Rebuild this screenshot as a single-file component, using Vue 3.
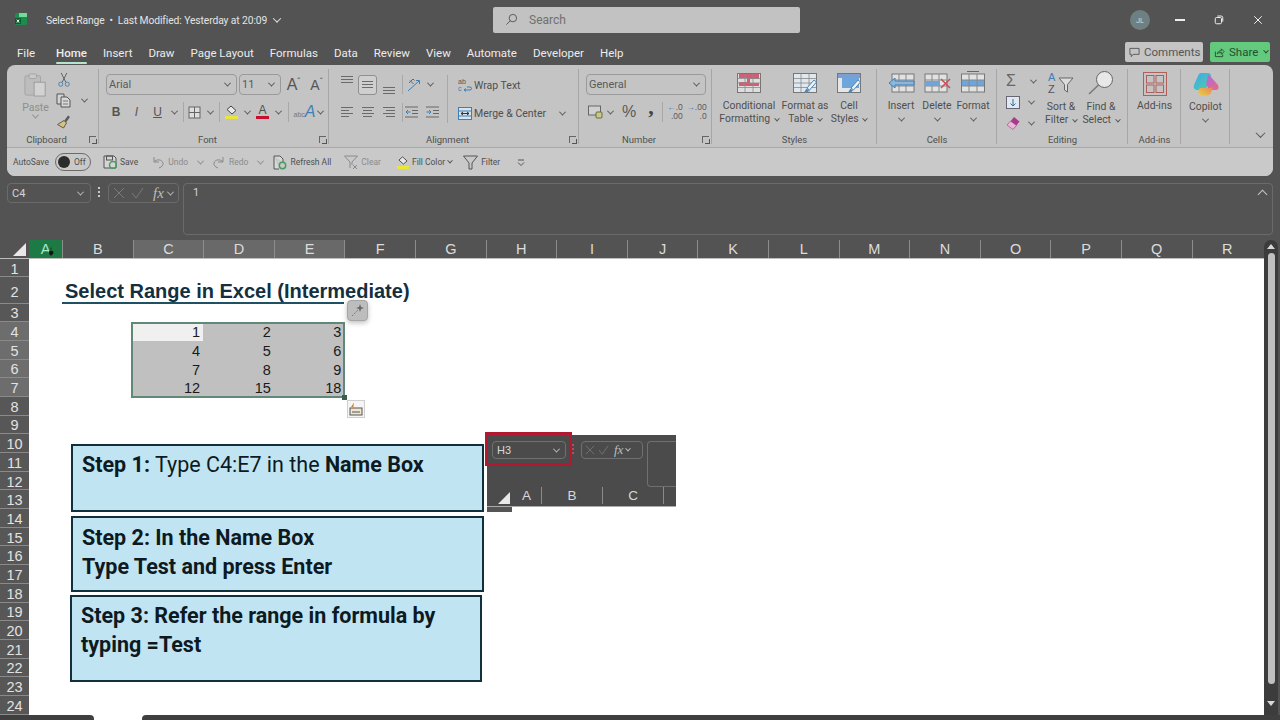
<template>
  <div class="app">
    <!-- title bar -->
    <header class="titlebar">
      <div class="title-left">
        <svg class="xl-logo" viewBox="0 0 14 14">
          <rect x="1" y="1" width="12" height="12" rx="1.5" fill="#1e8a4c" />
          <rect x="5" y="1" width="8" height="4" fill="#6fdc9c" />
          <rect x="1" y="6" width="6" height="6" fill="#0d5c31" />
          <path d="M2.8 7.6l2.4 3M5.2 7.6l-2.4 3" stroke="#fff" stroke-width="1" />
        </svg>
        <span class="doc-title">Select Range&nbsp; •&nbsp; Last Modified: Yesterday at 20:09</span>
        <span class="chev light title-chev"></span>
      </div>
      <div class="search">
        <svg class="search-icon" viewBox="0 0 14 14"><circle cx="8.5" cy="5.5" r="4" /><path d="M5.5 8.5L1.5 12.5" /></svg>
        <span>Search</span>
      </div>
      <div class="avatar">JL</div>
      <div class="win-btns">
        <span class="win-min"></span>
        <svg class="win-icon" viewBox="0 0 12 12"><rect x="1.5" y="3" width="7.5" height="7.5" rx="1.5" /><path d="M4 1.2h4.5a2 2 0 0 1 2 2V8" /></svg>
        <svg class="win-icon" viewBox="0 0 12 12"><path d="M1.5 1.5l9 9M10.5 1.5l-9 9" /></svg>
      </div>
    </header>

    <!-- tabs -->
    <nav class="tabs">
      <span v-for="tab in tabs" :key="tab" class="tab" :class="{ active: tab === 'Home' }">{{ tab }}</span>
      <div class="tab-actions">
        <button class="comments">
          <svg viewBox="0 0 12 12"><path d="M1 1.5h10v6.500H4.500L2.500 10.500V8H1z" /></svg>
          Comments
        </button>
        <button class="share">
          <svg viewBox="0 0 12 12"><path d="M1.500 5v5.500h8V8M3.500 7.500C4 5 6 4 8 4V2l3 3-3 3V6C6 6 4.800 6.300 3.500 7.500z" /></svg>
          Share <span class="chev dark small"></span>
        </button>
      </div>
    </nav>

    <!-- ribbon -->
    <section class="ribbon">
      <div class="ribbon-top">
        <!-- Clipboard -->
        <div class="group" style="width: 92px">
          <div class="group-body clip-body">
            <div class="paste">
              <svg width="23" height="26" viewBox="0 0 25 26">
                <rect x="1" y="3" width="17" height="21" rx="1.500" fill="#bdbdbd" stroke="#a2a2a2" />
                <rect x="5.500" y="1" width="8" height="5" rx="1" fill="#c9c9c9" stroke="#a2a2a2" />
                <rect x="11" y="10" width="12" height="15" fill="#d2d2d2" stroke="#9a9a9a" />
              </svg>
              <span class="muted">Paste</span>
              <span class="chev grey"></span>
            </div>
            <div class="clip-tools">
              <svg class="cut" width="14" height="15" viewBox="0 0 14 16"><path d="M4 1l5 10M10 1L5 11" stroke="#55606a" fill="none" /><circle cx="3.500" cy="13" r="2.200" fill="none" stroke="#4a7fa8" /><circle cx="10.500" cy="13" r="2.200" fill="none" stroke="#4a7fa8" /></svg>
              <div class="copy-row">
                <svg width="15" height="15" viewBox="0 0 15 15"><path d="M1 1h7v10H1z" fill="#d4d4d4" stroke="#555" /><path d="M5 4h6l3 3v7H5z" fill="#d8d8d8" stroke="#555" /><path d="M7 8h5M7 11h5" stroke="#777" /></svg>
                <span class="chev"></span>
              </div>
              <svg width="15" height="15" viewBox="0 0 15 15"><path d="M8 7l4-5.500 2 1.500-4 5.500z" fill="#5b5b5b" /><path d="M8 6.500l2.500 2.500-3 5-6-3.500z" fill="#d9c27a" stroke="#5b5b5b" /></svg>
            </div>
          </div>
          <div class="group-label shifted">Clipboard</div>
          <span class="launcher"></span>
        </div>

        <!-- Font -->
        <div class="group" style="width: 230px">
          <div class="group-body font-body">
            <div class="font-row-1">
              <div class="select font-name">Arial <span class="chev"></span></div>
              <div class="select font-size">11 <span class="chev"></span></div>
              <span class="grow-a">A<sup>ˆ</sup></span>
              <span class="grow-a shrink">A<sup>ˇ</sup></span>
            </div>
            <div class="font-row-2">
              <b class="fmt">B</b>
              <i class="fmt serifish">I</i>
              <span class="fmt under">U</span>
              <span class="chev"></span>
              <span class="vsep"></span>
              <svg width="13" height="13" viewBox="0 0 13 13"><rect x="1" y="1" width="11" height="11" fill="#dedede" stroke="#666" /><path d="M6.500 1v11M1 6.500h11" stroke="#666" /></svg>
              <span class="chev"></span>
              <span class="vsep"></span>
              <div class="swatch-icon">
                <svg width="13" height="10" viewBox="0 0 13 10"><path d="M6 1l5 4.500-4 3.500-5-4.500z" fill="#e8e8e8" stroke="#444" /></svg>
                <span class="swatch yellow"></span>
              </div>
              <span class="chev"></span>
              <div class="swatch-icon">
                <span class="letter-a">A</span>
                <span class="swatch red"></span>
              </div>
              <span class="chev"></span>
              <span class="vsep"></span>
              <span class="text-effect"><small>abc</small><em>A</em></span>
              <span class="chev"></span>
            </div>
          </div>
          <div class="group-label shifted">Font</div>
          <span class="launcher"></span>
        </div>

        <!-- Alignment -->
        <div class="group" style="width: 250px">
          <div class="group-body align-body">
            <div class="align-grid">
              <span class="lines top"><i></i><i></i><i></i></span>
              <span class="lines mid selected"><i></i><i></i><i></i></span>
              <span class="lines bottom"><i></i><i></i><i></i></span>
              <span class="vsep tall"></span>
              <div class="orient">
                <svg width="14" height="14" viewBox="0 0 14 14"><path d="M1 13L12 3M9 2.500h3.500V6" stroke="#3f7fb5" fill="none" /><path d="M2 5l4-4 1.500 1.500M3 2.500l3.500 3.500" stroke="#666" fill="none" /></svg>
                <span class="chev"></span>
              </div>
              <span class="lines"><i></i><i class="short"></i><i></i><i class="short"></i></span>
              <span class="lines center"><i></i><i class="short"></i><i></i><i class="short"></i></span>
              <span class="lines right"><i></i><i class="short"></i><i></i><i class="short"></i></span>
              <span class="vsep tall"></span>
              <div class="indents">
                <svg width="13" height="12" viewBox="0 0 13 12"><path d="M0 1h13M7 4.500h6M7 7.500h6M0 11h13" stroke="#666" /><path d="M5.500 6H1M3 4L1 6l2 2" stroke="#3f7fb5" fill="none" /></svg>
                <svg width="13" height="12" viewBox="0 0 13 12"><path d="M0 1h13M7 4.500h6M7 7.500h6M0 11h13" stroke="#666" /><path d="M0.500 6H5M3 4l2 2-2 2" stroke="#3f7fb5" fill="none" /></svg>
              </div>
            </div>
            <span class="vsep full"></span>
            <div class="wrap-col">
              <div class="icon-text">
                <svg width="14" height="14" viewBox="0 0 14 14"><text x="0" y="6" font-size="7" fill="#555" font-family="Liberation Sans">ab</text><path d="M9 9h3a1.500 1.500 0 0 1 0 3H6M8 10.500L6 12l2 1.500" stroke="#3f7fb5" fill="none" /><text x="0" y="13" font-size="7" fill="#3f7fb5" font-family="Liberation Sans">c</text></svg>
                Wrap Text
              </div>
              <div class="icon-text">
                <svg width="14" height="13" viewBox="0 0 14 13"><rect x="0.500" y="0.500" width="13" height="12" fill="#d5e4ef" stroke="#3f7fb5" /><path d="M0 4h14M0 9h14" stroke="#3f7fb5" /><path d="M3 6.500h8M5 5L3 6.500 5 8M9 5l2 1.500L9 8" stroke="#333" fill="none" /></svg>
                Merge &amp; Center
                <span class="chev merge-chev"></span>
              </div>
            </div>
          </div>
          <div class="group-label shifted">Alignment</div>
          <span class="launcher"></span>
        </div>

        <!-- Number -->
        <div class="group" style="width: 133px">
          <div class="group-body number-body">
            <div class="select general">General <span class="chev"></span></div>
            <div class="number-row">
              <svg width="15" height="14" viewBox="0 0 15 14"><rect x="0.500" y="1" width="12" height="9" fill="#d0d0d0" stroke="#666" /><rect x="8" y="7" width="6" height="6" rx="1" fill="#c7c98a" stroke="#6a6a3a" /></svg>
              <span class="chev"></span>
              <span class="percent">%</span>
              <span class="comma">,</span>
              <span class="vsep"></span>
              <span class="decimals"><em>←</em>.0<br />.00</span>
              <span class="decimals"><em>→</em>.00<br />.0</span>
            </div>
          </div>
          <div class="group-label shifted">Number</div>
          <span class="launcher"></span>
        </div>

        <!-- Styles -->
        <div class="group" style="width: 165px">
          <div class="group-body styles-body">
            <div class="big-btn">
              <svg width="24" height="20" viewBox="0 0 24 20"><rect x="0.500" y="0.500" width="23" height="19" fill="#dedede" stroke="#777" /><path d="M2 1h20v5H13v4h9v3H2V9h8V5H2z" fill="#cf5f75" /><path d="M8 1v18M16 1v18M1 5.500h22M1 10h22M1 14.500h22" stroke="#8b8b8b" stroke-width=".8" /></svg>
              <span>Conditional</span>
              <span>Formatting <i class="chev small"></i></span>
            </div>
            <div class="big-btn">
              <svg width="24" height="20" viewBox="0 0 24 20"><rect x="0.500" y="0.500" width="23" height="19" fill="#dfe8ef" stroke="#777" /><path d="M1 5.500h22M1 10h22M1 14.500h22M8 1v18M16 1v18" stroke="#888" stroke-width=".8" /><path d="M21 7l-7 8 2.500 2 7-8z" fill="#f1f1f1" stroke="#4f87b3" /><path d="M13.500 15.500l2.500 2-2 2h-3z" fill="#4f87b3" /></svg>
              <span>Format as</span>
              <span>Table <i class="chev small"></i></span>
            </div>
            <div class="big-btn">
              <svg width="24" height="20" viewBox="0 0 24 20"><rect x="0.500" y="0.500" width="23" height="19" fill="#e6e6e6" stroke="#777" /><rect x="1" y="1" width="22" height="4" fill="#7d9ed0" /><rect x="5" y="5" width="17" height="10" fill="#6da6dc" /><path d="M21 7l-7 8 2.500 2 7-8z" fill="#f1f1f1" stroke="#4f87b3" /><path d="M13.500 15.500l2.500 2-2 2h-3z" fill="#4f87b3" /></svg>
              <span>Cell</span>
              <span>Styles <i class="chev small"></i></span>
            </div>
          </div>
          <div class="group-label">Styles</div>
        </div>

        <!-- Cells -->
        <div class="group" style="width: 120px">
          <div class="group-body cells-body">
            <div class="big-btn">
              <svg width="27" height="20" viewBox="0 0 27 20"><rect x="4" y="1" width="22" height="18" fill="#e2e2e2" stroke="#777" /><path d="M4 7h22M4 13h22M11 1v18M18 1v18" stroke="#888" /><path d="M1 10l6-5v3h19v4H7v3z" fill="#8db7da" stroke="#3f7fb5" /></svg>
              <span>Insert</span>
              <span class="chev"></span>
            </div>
            <div class="big-btn">
              <svg width="27" height="20" viewBox="0 0 27 20"><rect x="1" y="1" width="22" height="18" fill="#e2e2e2" stroke="#777" /><path d="M1 7h22M1 13h22M8 1v18M15 1v18" stroke="#888" /><rect x="1" y="8" width="15" height="5" fill="#6da6dc" /><path d="M17 6l9 9M26 6l-9 9" stroke="#c4515a" stroke-width="1.500" /></svg>
              <span>Delete</span>
              <span class="chev"></span>
            </div>
            <div class="big-btn format-btn">
              <svg width="24" height="22" viewBox="0 0 24 22"><path d="M6 0.500h12" stroke="#666" /><rect x="0.500" y="3" width="23" height="18" fill="#e2e2e2" stroke="#777" /><rect x="1" y="9" width="22" height="6" fill="#6da6dc" /><path d="M1 9h22M1 15h22M8 3v18M16 3v18" stroke="#888" /></svg>
              <span>Format</span>
              <span class="chev"></span>
            </div>
          </div>
          <div class="group-label">Cells</div>
        </div>

        <!-- Editing -->
        <div class="group" style="width: 131px">
          <div class="group-body editing-body">
            <div class="edit-tools">
              <div><span class="sigma">Σ</span><span class="chev sigma-chev"></span></div>
              <div>
                <svg width="14" height="13" viewBox="0 0 14 13"><rect x="0.500" y="0.500" width="13" height="12" fill="#dfe9ef" stroke="#667" /><path d="M7 3v7M4.500 7.500L7 10l2.500-2.500" stroke="#2f6f9f" fill="none" /></svg>
                <span class="chev"></span>
              </div>
              <div>
                <svg width="14" height="14" viewBox="0 0 14 14"><path d="M8 1l5.500 4.500-6 7.500L2 8.500z" fill="#a83a8c" /><path d="M1 9l3.500-4 6 4.500L7 13.500z" fill="#e8b9d7" stroke="#a83a8c" stroke-width=".6" /></svg>
                <span class="chev"></span>
              </div>
            </div>
            <div class="big-btn sort-btn">
              <svg width="26" height="24" viewBox="0 0 26 24"><text x="0" y="10" font-size="11" fill="#3f7fb5" font-family="Liberation Sans">A</text><text x="0" y="22" font-size="11" fill="#555" font-family="Liberation Sans">Z</text><path d="M11 7h14l-5.500 6.500V21l-3-2v-5.500z" fill="#dcdcdc" stroke="#666" /></svg>
              <span>Sort &amp;</span>
              <span>Filter <i class="chev small"></i></span>
            </div>
            <div class="big-btn sort-btn">
              <svg width="26" height="24" viewBox="0 0 26 24"><circle cx="16.500" cy="8.500" r="8" fill="#e8e8e8" stroke="#666" /><path d="M10.500 14L1 23" stroke="#777" stroke-width="1.500" /></svg>
              <span>Find &amp;</span>
              <span>Select <i class="chev small"></i></span>
            </div>
          </div>
          <div class="group-label">Editing</div>
        </div>

        <!-- Add-ins -->
        <div class="group" style="width: 53px">
          <div class="group-body single-body">
            <div class="big-btn">
              <svg class="square" width="24" height="24" viewBox="0 0 24 24"><rect x="0.500" y="0.500" width="23" height="23" fill="none" stroke="#b0605a" /><rect x="3.500" y="3.500" width="7.500" height="7.500" fill="none" stroke="#b0605a" /><rect x="13" y="3.500" width="7.500" height="7.500" fill="none" stroke="#b0605a" /><rect x="3.500" y="13" width="7.500" height="7.500" fill="none" stroke="#b0605a" /><rect x="13" y="13" width="7.500" height="7.500" fill="none" stroke="#b0605a" /></svg>
              <span>Add-ins</span>
            </div>
          </div>
          <div class="group-label">Add-ins</div>
        </div>

        <!-- Copilot -->
        <div class="group" style="width: 49px">
          <div class="group-body single-body">
            <div class="big-btn">
              <svg class="square" width="26" height="24" viewBox="0 0 26 24">
                <defs>
                  <linearGradient id="cp-a" x1="0" y1="0" x2="1" y2="1"><stop offset="0" stop-color="#3fa7e8" /><stop offset="1" stop-color="#4fd0a8" /></linearGradient>
                  <linearGradient id="cp-b" x1="0" y1="0" x2="1" y2="1"><stop offset="0" stop-color="#b06ad8" /><stop offset="1" stop-color="#e86a8a" /></linearGradient>
                  <linearGradient id="cp-c" x1="0" y1="1" x2="1" y2="0"><stop offset="0" stop-color="#e8d04a" /><stop offset="1" stop-color="#e87a5a" /></linearGradient>
                </defs>
                <path d="M8 1h7c2 0 3 1 3 3L14 15c-.5 2-2 3-4 3H4C1.500 18 0 15.500 1 13L5 4c.8-1.800 1.800-3 3-3z" fill="url(#cp-a)" />
                <path d="M15 3c1.500 0 2.500 .800 3 2l7 8c1.200 2.500 .5 5-2 5h-7l-3-6z" fill="url(#cp-b)" />
                <path d="M7 16h10c1.500 0 3-1 3.500-2.500L18 21c-.6 1.500-2 2.500-3.500 2.500H8C5 23.500 4.500 19 7 16z" fill="url(#cp-c)" />
              </svg>
              <span class="copilot-label">Copilot</span>
              <span class="chev"></span>
            </div>
          </div>
        </div>

        <div class="ribbon-end"><span class="chev big"></span></div>
      </div>

      <!-- quick access -->
      <div class="qat">
        <span class="qat-item autosave">AutoSave</span>
        <span class="toggle"><i></i><b>Off</b></span>
        <span class="qat-item save">
          <svg width="14" height="14" viewBox="0 0 14 14"><path d="M1 1h10l2 2v10H1z" fill="#d5d5d5" stroke="#555" /><rect x="3.500" y="1" width="6" height="4" fill="none" stroke="#555" /><circle cx="10" cy="10" r="3.500" fill="none" stroke="#4c9a62" stroke-width="1.500" /></svg>
          Save
        </span>
        <span class="qat-item off undo">
          <svg width="14" height="14" viewBox="0 0 14 14"><path d="M3 2v5h5M3 7c2-3 8-3 9 1 .5 2-1 4-4 5" fill="none" stroke="#8a8a8a" /></svg>
          Undo
        </span>
        <span class="chev grey qat-chev"></span>
        <span class="qat-item off redo">
          <svg width="14" height="14" viewBox="0 0 14 14"><path d="M11 2v5H6M11 7C9 4 3 4 2 8c-.5 2 1 4 4 5" fill="none" stroke="#8a8a8a" /></svg>
          Redo
        </span>
        <span class="chev grey qat-chev"></span>
        <span class="qat-item refresh">
          <svg width="14" height="15" viewBox="0 0 14 15"><path d="M1 1h6l3 3v3M1 1v13h5" fill="#d8d8d8" stroke="#555" /><circle cx="9.500" cy="10.500" r="3.200" fill="none" stroke="#4c9a62" stroke-width="1.500" /></svg>
          Refresh All
        </span>
        <span class="qat-item off clear">
          <svg width="14" height="14" viewBox="0 0 14 14"><path d="M0.500 1h13L8 7v3" fill="none" stroke="#8a8a8a" /><path d="M0.500 1L6 7v6" fill="none" stroke="#8a8a8a" /><path d="M9 10l4 4M13 10l-4 4" stroke="#8a8a8a" /></svg>
          Clear
        </span>
        <span class="qat-item fill">
          <span class="swatch-icon qat-swatch">
            <svg width="12" height="9" viewBox="0 0 13 10"><path d="M6 1l5 4.500-4 3.500-5-4.500z" fill="#e8e8e8" stroke="#444" /></svg>
            <span class="swatch yellow"></span>
          </span>
          Fill Color
          <span class="chev small"></span>
        </span>
        <span class="qat-item filter">
          <svg width="15" height="15" viewBox="0 0 15 15"><path d="M0.500 1h14L9 8v6H6V8z" fill="none" stroke="#555" /></svg>
          Filter
        </span>
        <svg class="qat-more" width="8" height="7" viewBox="0 0 8 7"><path d="M1 1h6M1 3.500l3 3 3-3" fill="none" stroke="#555" /></svg>
      </div>
    </section>

    <!-- formula bar -->
    <section class="formula-bar">
      <div class="name-box">C4 <span class="chev lightish"></span></div>
      <span class="dots"></span>
      <div class="fx-box">
        <svg width="12" height="12" viewBox="0 0 12 12"><path d="M1 1l10 10M11 1L1 11" stroke="#7a7a7a" /></svg>
        <svg width="13" height="12" viewBox="0 0 13 12"><path d="M1 6l4 5 7-10" stroke="#7a7a7a" fill="none" /></svg>
        <span class="fx">fx</span>
        <span class="chev lightish"></span>
      </div>
      <div class="formula-input">1<span class="chev up"></span></div>
    </section>

    <!-- sheet -->
    <section class="sheet-area">
      <div class="sheet-main">
        <div class="col-heads">
          <div class="corner"><i></i></div>
          <div
            v-for="c in columns"
            :key="c"
            class="col-head"
            :class="{ green: c === 'A', sel: selectedCols.includes(c) }"
          >{{ c }}</div>
          <svg class="pointer" viewBox="0 0 6 9"><path d="M3 0.500v4M1 4.500h4v2L3 8.500 1 6.500z" fill="#111" stroke="#111" stroke-width=".6" /></svg>
        </div>
        <div class="sheet">
          <template v-for="r in 24" :key="r">
            <div class="row-head" :class="{ sel: r >= 4 && r <= 7, tall: r === 2 }">{{ r }}</div>
            <div
              v-for="c in columns"
              :key="c + r"
              class="cell"
              :class="cellClass(c, r)"
            >{{ values[c + r] }}</div>
          </template>

          <!-- things floating on the sheet -->
          <div class="selection"><i></i></div>
          <div class="spark">
            <svg width="15" height="15" viewBox="0 0 15 15"><path d="M10 1l1 3 3 1-3 1-1 3-1-3-3-1 3-1z" fill="#666" /><path d="M2 13l6-6" stroke="#777" stroke-dasharray="1.500 1" /></svg>
          </div>
          <div class="quick">
            <svg width="14" height="14" viewBox="0 0 14 14"><rect x="1" y="6" width="12" height="7" fill="#f0e6d0" stroke="#555" /><path d="M3 10h8" stroke="#555" /><path d="M5 0.500L2 5h3L4 8" fill="#d9822b" /></svg>
          </div>

          <div class="step-box step-1">
            <p><b>Step 1:</b> Type C4:E7 in the <b>Name Box</b></p>
          </div>
          <div class="step-box step-2">
            <p><b>Step 2: In the Name Box</b></p>
            <p><b>Type Test and press Enter</b></p>
          </div>
          <div class="step-box step-3">
            <p><b>Step 3: Refer the range in formula by</b></p>
            <p><b>typing =Test</b></p>
          </div>

          <div class="pic">
            <div class="pic-top">
              <div class="pic-name">H3 <span class="chev lightish"></span></div>
              <span class="dots red-dots"></span>
              <div class="pic-fx">
                <svg width="10" height="10" viewBox="0 0 12 12"><path d="M1 1l10 10M11 1L1 11" stroke="#777" /></svg>
                <svg width="11" height="10" viewBox="0 0 13 12"><path d="M1 6l4 5 7-10" stroke="#777" fill="none" /></svg>
                <span class="fx small-fx">fx</span>
                <span class="chev lightish small"></span>
              </div>
              <div class="pic-input"></div>
            </div>
            <div class="pic-head">
              <div class="pic-corner"><i></i></div>
              <span class="pic-a">A</span>
              <span class="pic-b">B</span>
              <span class="pic-c">C</span>
            </div>
            <div class="pic-frame"></div>
          </div>
          <div class="pic-tail"></div>
        </div>
      </div>

      <div class="vscroll">
        <span class="arrow-up"></span>
        <div class="thumb"></div>
        <span class="arrow-down"></span>
      </div>
    </section>

    <!-- bottom edge -->
    <footer class="bottom-edge">
      <div class="edge-left"></div>
      <div class="edge-gap"></div>
      <div class="edge-right"></div>
    </footer>
  </div>
</template>

<script setup>
const tabs = ['File', 'Home', 'Insert', 'Draw', 'Page Layout', 'Formulas', 'Data', 'Review', 'View', 'Automate', 'Developer', 'Help']

const columns = ['A', 'B', 'C', 'D', 'E', 'F', 'G', 'H', 'I', 'J', 'K', 'L', 'M', 'N', 'O', 'P', 'Q', 'R']
const selectedCols = ['C', 'D', 'E']

const values = {
  B2: 'Select Range in Excel (Intermediate)',
  C4: 1, D4: 2, E4: 3,
  C5: 4, D5: 5, E5: 6,
  C6: 7, D6: 8, E6: 9,
  C7: 12, D7: 15, E7: 18
}

function cellClass(c, r) {
  return {
    title: c === 'B' && r === 2,
    underlined: r === 2 && ['B', 'C', 'D', 'E'].includes(c),
    picked: r >= 4 && r <= 7 && selectedCols.includes(c),
    active: c === 'C' && r === 4
  }
}
</script>

<style>
html, body { margin: 0; background: #535353; }
</style>

<style scoped>
.app {
  width: 1280px; height: 720px; overflow: hidden;
  display: flex; flex-direction: column;
  background: #535353; color: #4c4c4c;
  font-family: Roboto, "Liberation Sans", sans-serif;
  font-size: 11px;
}
button { font-family: inherit; border: 0; }

/* chevrons */
.chev {
  display: inline-block; width: 4px; height: 4px; flex: none;
  border-right: 1px solid #555; border-bottom: 1px solid #555;
  transform: rotate(45deg) translate(-1px, -1px);
}
.chev.small { width: 3px; height: 3px; }
.chev.big { width: 6px; height: 6px; }
.chev.grey { border-color: #8d8d8d; }
.chev.light { border-color: #e2e2e2; width: 5px; height: 5px; }
.chev.lightish { border-color: #bdbdbd; }
.chev.dark { border-color: #24502f; }

/* title bar */
.titlebar { height: 40px; flex: none; display: flex; align-items: center; color: #e4e4e4; }
.title-left { width: 493px; flex: none; display: flex; align-items: center; white-space: nowrap; }
.xl-logo { width: 14px; height: 14px; margin: 0 0 2px 14px; }
.doc-title { margin-left: 18px; font-size: 10.300px; letter-spacing: -0.100px; }
.title-chev { margin-left: 7px; }
.search {
  width: 307px; height: 26px; box-sizing: border-box; margin-bottom: 1px;
  background: #c2c2c2; border-radius: 2px;
  display: flex; align-items: center; padding-left: 12px; gap: 11px;
  color: #707070; font-size: 12px;
}
.search-icon { width: 13px; height: 13px; fill: none; stroke: #555; }
.avatar {
  width: 20px; height: 20px; border-radius: 50%; margin-left: 330px;
  background: #6f8083; color: #d6dcdc; font-size: 7.500px;
  display: flex; align-items: center; justify-content: center;
}
.win-btns { display: flex; align-items: center; margin-left: 25px; }
.win-btns > * { margin-right: 29px; }
.win-min { width: 10px; height: 1.500px; background: #eee; }
.win-icon { width: 10px; height: 10px; fill: none; stroke: #eee; stroke-width: 1.200; }
.win-btns > .win-icon:last-child { margin-right: 0; }

/* tabs */
.tabs {
  height: 25px; flex: none; display: flex; align-items: center; gap: 16px;
  padding-left: 17px; color: #ececec; font-size: 11.500px;
}
.tab { position: relative; line-height: 20px; }
.tab:first-child { margin-right: 5px; }
.tab.active { font-weight: 500; }
.tab.active::after {
  content: ""; position: absolute; left: 0; right: 0; bottom: -1px; height: 1.500px;
  background: #b7e4cd; border-radius: 1px;
}
.tab-actions { margin-left: auto; margin-right: 10px; display: flex; gap: 7px; margin-top: -1px; }
.comments, .share {
  height: 20px; padding: 0 0 0 4px; border-radius: 2px; display: flex; align-items: center; gap: 4px;
  font-size: 11.500px;
}
.comments { width: 78px; background: #c4c4c4; color: #555; box-sizing: border-box; }
.comments svg { width: 11px; height: 11px; fill: none; stroke: #555; }
.share { width: 60px; background: #62c97d; color: #24502f; box-sizing: border-box; }
.share svg { width: 11px; height: 11px; fill: none; stroke: #24502f; }
.share .chev { margin-left: 2px; }

/* ribbon */
.ribbon {
  height: 111px; flex: none; margin: 0 7px; box-sizing: border-box;
  background: #c4c4c4; border-radius: 8px;
  display: flex; flex-direction: column;
}
.ribbon-top { height: 82px; flex: none; display: flex; border-bottom: 1px solid #a9a9a9; box-sizing: content-box; }
.group { position: relative; display: flex; flex-direction: column; box-sizing: border-box; height: 100%; }
.group::after {
  content: ""; position: absolute; right: 0; top: 4px; bottom: 3px; width: 1px; background: #a6a6a6;
}
.group-body { height: 67px; flex: none; box-sizing: border-box; }
.group-label { height: 15px; line-height: 15px; text-align: center; font-size: 9.500px; color: #4f4f4f; }
.group-label.shifted { padding-right: 13px; }
.launcher {
  position: absolute; right: 3px; bottom: 4px; width: 7px; height: 7px; box-sizing: border-box;
  border-left: 1px solid #666; border-top: 1px solid #666;
}
.launcher::after {
  content: ""; position: absolute; right: -1px; bottom: -1px; width: 4px; height: 4px;
  border-right: 1px solid #555; border-bottom: 1px solid #555;
}
.muted { color: #8e8e8e; }
.vsep { width: 1px; height: 20px; background: #a8a8a8; }

/* clipboard */
.clip-body { display: flex; padding: 7px 0 0 17px; }
.paste { width: 23px; display: flex; flex-direction: column; align-items: center; font-size: 10.500px; }
.paste span:nth-child(2) { margin-top: 3px; line-height: 13px; }
.clip-tools { margin-left: 9px; display: flex; flex-direction: column; gap: 6px; }
.cut { margin-left: 1px; }
.copy-row { display: flex; align-items: center; gap: 11px; }

/* font */
.font-body { padding: 9px 0 0 7px; }
.select {
  height: 21px; box-sizing: border-box; border: 1px solid #9a9a9a; border-radius: 4px;
  background: #c4c4c4; display: flex; align-items: center; justify-content: space-between;
  padding: 0 6px 0 2px; font-size: 11px; color: #5a5a5a;
}
.font-row-1 { display: flex; align-items: center; gap: 2px; }
.font-name { width: 131px; }
.font-size { width: 42px; }
.grow-a { font-size: 16px; width: 21px; text-align: center; color: #555; font-family: "Liberation Sans", sans-serif; line-height: 1; }
.grow-a sup { font-size: 9px; line-height: 0; }
.shrink { font-size: 14px; }
.font-row-2 {
  display: grid; margin-top: 6px; height: 22px; align-items: center; justify-items: center;
  grid-template-columns: 20px 21px 21px 12px 6px 16px 16px 2px 22px 10px 21px 11px 9px 23px 8px;
}
.fmt { font-family: "Liberation Sans", sans-serif; font-size: 12px; color: #555; }
.under { text-decoration: underline; }
.swatch-icon { display: flex; flex-direction: column; align-items: center; gap: 1px; width: 14px; }
.swatch { width: 13px; height: 3px; display: block; }
.swatch.yellow { background: #e8e636; }
.swatch.red { background: #c8102e; }
.letter-a { font-family: "Liberation Sans", sans-serif; font-size: 12px; line-height: 10px; }
.text-effect { font-family: "Liberation Sans", sans-serif; line-height: 1; white-space: nowrap; }
.text-effect small { font-size: 7px; color: #777; }
.text-effect em { font-size: 16px; color: #3f7fb5; }

/* alignment */
.align-body { display: flex; padding: 9px 0 0 7px; }
.align-grid {
  display: grid; grid-template-columns: 21px 21px 21px 6px 40px; grid-template-rows: 21px 22px;
  row-gap: 6px; align-items: center; justify-items: center;
}
.lines { display: flex; flex-direction: column; gap: 2.200px; width: 12px; }
.lines i { display: block; height: 1px; background: #6a6a6a; width: 100%; }
.lines i.short { width: 70%; }
.lines.center { align-items: center; }
.lines.right { align-items: flex-end; }
.lines.top { align-self: start; padding-top: 2px; }
.lines.bottom { align-self: end; padding-bottom: 1px; }
.lines.selected {
  width: 19px; height: 20px; box-sizing: border-box; padding: 5px 3px; border: 1px solid #8f8f8f;
  border-radius: 3px; background: #cfcfcf;
}
.vsep.tall { height: 19px; }
.orient { display: flex; align-items: center; gap: 7px; justify-self: start; padding-left: 2px; }
.indents { display: flex; gap: 8px; justify-self: start; padding-left: 0; }
.vsep.full { height: 48px; margin-left: 2px; margin-top: 1px; }
.wrap-col { margin-left: 10px; display: flex; flex-direction: column; gap: 6px; }
.icon-text { height: 22px; display: flex; align-items: center; gap: 2px; font-size: 10.500px; color: #4f4f4f; white-space: nowrap; }
.merge-chev { margin-left: 12px; }

/* number */
.number-body { padding: 9px 0 0 7px; }
.general { width: 120px; }
.number-row {
  display: grid; margin-top: 6px; height: 22px; align-items: center; justify-items: center;
  grid-template-columns: 18px 12px 26px 18px 4px 22px 21px;
}
.percent { font-family: "Liberation Sans", sans-serif; font-size: 16px; color: #5a5a5a; }
.comma { font-family: "Liberation Serif", serif; font-weight: bold; font-size: 22px; line-height: 10px; margin-top: -11px; color: #444; }
.decimals { font-family: "Liberation Sans", sans-serif; font-size: 8.500px; line-height: 9px; color: #5a5a5a; text-align: right; white-space: nowrap; }
.decimals em { color: #3f7fb5; font-style: normal; }

/* big buttons */
.big-btn { display: flex; flex-direction: column; align-items: center; line-height: 13px; font-size: 10.400px; color: #4f4f4f; white-space: nowrap; }
.big-btn svg { margin-bottom: 6px; }
.big-btn > span.chev { margin-top: 5px; }
.big-btn i.chev { margin-left: 2px; }
.styles-body { display: grid; grid-template-columns: 58px 54px 34px; padding: 8px 0 0 8px; }
.cells-body { display: grid; grid-template-columns: 36px 36px 36px; padding: 8px 0 0 6px; }
.format-btn svg { margin-top: -2px; }
.editing-body { display: flex; padding: 6px 0 0 0; }
.edit-tools { width: 44px; padding: 2px 0 0 9px; box-sizing: border-box; display: flex; flex-direction: column; gap: 5px; }
.edit-tools > div { height: 16px; display: flex; align-items: center; gap: 9px; }
.sigma { font-family: "Liberation Sans", sans-serif; font-size: 16px; width: 12px; line-height: 1; color: #666; }
.sigma-chev { margin-left: 4px; }
.sort-btn { width: 40px; }
.sort-btn svg { margin-bottom: 5px; }
.single-body { display: flex; justify-content: center; padding-top: 7px; }
.big-btn svg.square { margin-bottom: 3px; }
.copilot-label { margin-top: 1px; }
.ribbon-end { flex: 1; display: flex; justify-content: flex-end; align-items: flex-end; padding: 0 9px 9px 0; }

/* quick access */
.qat { flex: 1; display: flex; align-items: center; background: #c9c9c9; border-radius: 0 0 8px 8px; padding-left: 6px; font-size: 8.500px; color: #4f4f4f; }
.qat-item { display: flex; align-items: center; gap: 3px; white-space: nowrap; }
.qat-item.off { color: #8b8b8b; }
.autosave { width: 36px; }
.toggle {
  margin-left: 6px; width: 36px; height: 18px; box-sizing: border-box; border: 1px solid #6b6b6b; border-radius: 9px;
  display: flex; align-items: center; padding-left: 2px; gap: 4px; flex: none;
}
.toggle i { width: 12px; height: 12px; border-radius: 50%; background: #2c2c2c; }
.toggle b { font-weight: normal; }
.save { margin-left: 12px; }
.undo { margin-left: 13px; }
.qat-chev { margin-left: 10px; }
.redo { margin-left: 9px; }
.refresh { margin-left: 10px; }
.clear { margin-left: 13px; }
.fill { margin-left: 16px; }
.qat-swatch { width: 12px; }
.qat-swatch .swatch { width: 12px; }
.filter { margin-left: 11px; }
.qat-more { margin-left: 17px; }

/* formula bar */
.formula-bar { height: 52px; flex: none; margin: 7px 7px 5px; display: flex; align-items: flex-start; color: #d4d4d4; font-size: 11px; }
.name-box {
  width: 84px; height: 20px; box-sizing: border-box; border: 1px solid #6b6b6b; border-radius: 4px;
  display: flex; align-items: center; justify-content: space-between; padding: 0 7px 0 4px;
}
.dots { width: 2px; height: 2px; margin: 4px 8px 0 7px; background: #c8c8c8; box-shadow: 0 4px 0 #c8c8c8, 0 8px 0 #c8c8c8; flex: none; }
.fx-box {
  width: 71px; height: 20px; box-sizing: border-box; border: 1px solid #6b6b6b; border-radius: 4px;
  display: flex; align-items: center; padding-left: 4px; gap: 6px;
}
.fx { font-family: "Liberation Serif", serif; font-style: italic; font-size: 15px; color: #bdbdbd; margin-left: 3px; }
.fx-box .chev { margin-left: -2px; }
.formula-input {
  flex: 1; margin-left: 4px; height: 52px; box-sizing: border-box; border: 1px solid #6b6b6b; border-radius: 4px;
  padding: 2px 9px; display: flex; justify-content: space-between; align-items: flex-start;
}
.chev.up { transform: rotate(225deg); border-color: #c4c4c4; width: 6px; height: 6px; margin-top: 5px; margin-right: -3px; }

/* sheet */
.sheet-area { height: 475px; flex: none; display: flex; }
.sheet-main { width: 1264px; flex: none; overflow: hidden; }
.col-heads {
  position: relative; height: 19px; display: grid; box-sizing: border-box;
  grid-template-columns: 29px 33px repeat(17, 70.600px);
  font-family: "Liberation Sans", sans-serif; font-size: 14.500px; color: #dcdcdc;
  border-bottom: 1px solid #bdbdbd;
}
.corner { position: relative; }
.corner i {
  position: absolute; right: 3px; bottom: 2px; width: 0; height: 0;
  border-left: 13px solid transparent; border-bottom: 13px solid #e8e8e8;
}
.col-head { text-align: center; line-height: 18px; border-left: 1px solid #8d8d8d; box-sizing: border-box; background: #535353; }
.col-head.sel { background: #696969; }
.col-head.green { background: #1d7a45; color: #a9e8c3; border-left: 0; }
.pointer { position: absolute; left: 48px; top: 7px; width: 6px; height: 9px; }

.sheet {
  position: relative; height: 456px; display: grid; background: #fff; overflow: hidden;
  grid-template-columns: 29px 33px repeat(17, 70.600px);
  grid-template-rows: 18px 26.500px repeat(22, 18.700px);
  font-family: "Liberation Sans", sans-serif; font-size: 14.500px; color: #222;
}
.row-head {
  background: #575757; color: #e2e2e2;
  border-bottom: 1px solid #8a8a8a; box-sizing: border-box; padding-top: 2px;
  display: flex; align-items: center; justify-content: center; font-size: 14.500px;
}
.row-head.tall { padding-top: 5px; }
.row-head.sel { background: #6d6d6d; }
.cell { min-width: 0; box-sizing: border-box; line-height: 19px; white-space: nowrap; }
.cell.title {
  font-weight: bold; font-size: 20px; color: #14303e; padding: 2px 0 0 3px; line-height: 24px; overflow: visible;
}
.cell.underlined { border-bottom: 2px solid #1f5163; }
.cell.picked { background: #c0c0c0; text-align: right; padding: 1px 3px 0 0; color: #1a1a1a; }
.cell.active { background: #f0f0f0; }

.selection {
  position: absolute; left: 131px; top: 63px; width: 214px; height: 76px; box-sizing: border-box;
  border: 2px solid #5f8877; pointer-events: none;
}
.selection i { position: absolute; right: -4px; bottom: -4px; width: 5px; height: 5px; background: #3a5d4e; }
.spark {
  position: absolute; left: 347px; top: 41px; width: 21px; height: 21px; border-radius: 4px;
  background: #bdbdbd; border: 1px solid #a5a5a5; box-sizing: border-box; box-shadow: 0 2px 5px rgba(0,0,0,.25);
  display: flex; align-items: center; justify-content: center;
}
.quick {
  position: absolute; left: 347px; top: 141px; width: 18px; height: 18px; box-sizing: border-box;
  border: 1px solid #cfcfcf; background: #f5f5f5; display: flex; align-items: center; justify-content: center;
}

.step-box {
  position: absolute; box-sizing: border-box; background: #c1e4f3; border: 2px solid #10303c;
  font-family: Roboto, "Noto Sans", sans-serif; font-size: 21.500px; line-height: 29px; color: #0d1a22; padding: 4px 0 0 9px;
}
.step-box p { margin: 0; }
.step-box b { font-weight: 700; }
.step-1 { left: 71px; top: 185px; width: 413px; height: 68px; }
.step-2 { left: 71px; top: 257px; width: 413px; height: 76px; padding-top: 5px; }
.step-3 { left: 70px; top: 336px; width: 412px; height: 87px; padding-top: 4px; }

.pic {
  position: absolute; left: 487px; top: 176px; width: 189px; height: 72px; background: #4b4b4b;
  border-bottom: 1px solid #aaa; box-sizing: border-box; color: #d8d8d8;
}
.pic-top { height: 52px; display: flex; align-items: flex-start; padding: 6px 0 0 5px; box-sizing: border-box; font-size: 11px; }
.pic-name {
  width: 74px; height: 18px; box-sizing: border-box; border: 1px solid #707070; border-radius: 4px;
  display: flex; align-items: center; justify-content: space-between; padding: 0 6px 0 4px;
}
.dots.red-dots { background: #c0475c; box-shadow: 0 4px 0 #c0475c, 0 8px 0 #c0475c; margin: 3px 7px 0 6px; }
.pic-fx {
  width: 62px; height: 18px; box-sizing: border-box; border: 1px solid #707070; border-radius: 4px;
  display: flex; align-items: center; gap: 3px; padding-left: 3px;
}
.small-fx { font-size: 13px; margin-left: 2px; }
.pic-input { flex: 1; margin-left: 4px; height: 46px; box-sizing: border-box; border: 1px solid #707070; border-right: 0; border-radius: 4px 0 0 4px; }
.pic-head { position: relative; height: 19px; font-family: "Liberation Sans", sans-serif; font-size: 13.500px; line-height: 17px; }
.pic-corner i {
  position: absolute; left: 11px; bottom: 2px; width: 0; height: 0;
  border-left: 12px solid transparent; border-bottom: 12px solid #e8e8e8;
}
.pic-a, .pic-b, .pic-c { position: absolute; top: 0; height: 17px; text-align: center; border-left: 1px solid #8a8a8a; box-sizing: border-box; }
.pic-a { left: 25px; width: 29px; border-left: 0; }
.pic-b { left: 54px; width: 61px; }
.pic-c { left: 115px; width: 62px; border-right: 1px solid #8a8a8a; }
.pic-frame {
  position: absolute; left: -2px; top: -3px; width: 87px; height: 34px; box-sizing: border-box;
  border: 3px solid #b2182f; pointer-events: none;
}
.pic-tail { position: absolute; left: 487px; top: 248px; width: 25px; height: 5px; background: #555; }

/* vertical scrollbar */
.vscroll {
  width: 14px; margin: 0 2px 0 0; background: #3c3c3c; border-radius: 7px 7px 0 0;
  position: relative; display: flex; flex-direction: column; align-items: center;
}
.arrow-up, .arrow-down { width: 0; height: 0; border-left: 4px solid transparent; border-right: 4px solid transparent; flex: none; }
.arrow-up { margin-top: 4px; border-bottom: 5px solid #d8d8d8; }
.arrow-down { margin-top: 17px; border-top: 5px solid #d8d8d8; }
.thumb { width: 7px; height: 431px; margin-top: 4px; background: #c0c0c0; border-radius: 4px; flex: none; }

/* bottom edge */
.bottom-edge { height: 5px; flex: none; display: flex; background: #fff; }
.edge-left { width: 94px; background: #3f3f3f; border-radius: 0 4px 0 0; }
.edge-gap { width: 48px; }
.edge-right { flex: 1; background: #3f3f3f; border-radius: 4px 0 0 0; }
</style>
